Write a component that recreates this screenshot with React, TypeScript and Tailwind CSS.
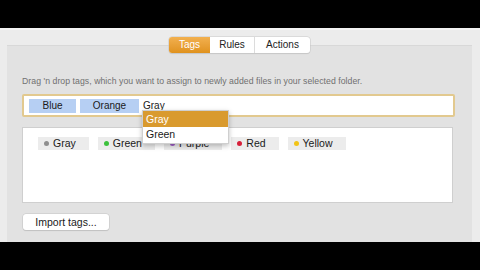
import React from 'react'

const font = { fontFamily: '"Liberation Sans", Arial, sans-serif' }

const tags = [
  { name: 'Gray', dot: 'bg-[#8e8e8e]' },
  { name: 'Green', dot: 'bg-[#3cc13c]' },
  { name: 'Purple', dot: 'bg-[#a05ec8]' },
  { name: 'Red', dot: 'bg-[#d6203a]' },
  { name: 'Yellow', dot: 'bg-[#f2c417]' },
]

function Tabs() {
  return (
    <div className="relative z-10 flex justify-center">
      <div className="flex h-[16px] rounded-[3px] bg-white shadow-[0_0_0_0.5px_#c8c8c8,0_1px_1px_rgba(0,0,0,0.12)] text-[10px] leading-[16px] text-[#222]">
        <div className="w-[41px] text-center rounded-l-[3px] bg-gradient-to-b from-[#f2b04e] to-[#e0921c] text-white">Tags</div>
        <div className="w-[45px] text-center border-r border-[#dcdcdc]">Rules</div>
        <div className="w-[55px] text-center">Actions</div>
      </div>
    </div>
  )
}

export default function App() {
  return (
    <div className="w-[480px] h-[270px] bg-black flex flex-col overflow-hidden" style={font}>
      <div className="h-[28px] shrink-0" />
      <div className="h-[214px] shrink-0 bg-[#ececec] border-t-2 border-[#f3f3f3] flex flex-col pt-[7px] pl-[7px] pr-[8px]">
        <Tabs />
        <div className="relative -mt-[8px] flex-1 bg-[#e2e2e2] border-t border-[#d8d8d8] pl-[15px] pr-[17px] pt-[30px]">
          <p className="text-[8.7px] leading-[10px] text-[#707070] tracking-[0.05px]">
            Drag 'n drop tags, which you want to assign to newly added files in your selected folder.
          </p>
          <div className="mt-[8px] h-[23px] bg-white border-2 border-[#e2c98f] rounded-[2px] flex items-center gap-[4px] pl-[5px] text-[10px] text-[#1a1a1a]">
            <span className="h-[14px] w-[47px] bg-[#b6cff3] text-center leading-[14px]">Blue</span>
            <span className="h-[14px] w-[59px] bg-[#b6cff3] text-center leading-[14px]">Orange</span>
            <span className="leading-[14px]">Gray</span>
          </div>
          <div className="relative mt-[10px] h-[76px] mr-[2px] bg-white border border-[#cfcfcf] flex items-start gap-[9px] pl-[15px] pt-[9px]">
            {tags.map((t) => (
              <div key={t.name} className="h-[13px] bg-[#ececec] flex items-center gap-[4px] pl-[6px] pr-[13px] text-[10.5px] text-[#1a1a1a]">
                <span className={`w-[5px] h-[5px] rounded-full ${t.dot}`} />
                <span className="leading-[13px]">{t.name}</span>
              </div>
            ))}
          </div>
          <div className="absolute left-[135px] top-[64px] w-[87px] bg-white border border-[#cfcfcf] shadow-[0_2px_5px_rgba(0,0,0,0.25)] text-[10.5px] z-20">
            <div className="h-[16px] leading-[16px] pl-[3px] bg-[#d99a2e] text-white">Gray</div>
            <div className="h-[16px] leading-[15px] pl-[3px] text-[#1a1a1a]">Green</div>
          </div>
          <button className="mt-[11px] ml-[1px] h-[16px] w-[86px] bg-white rounded-[3px] shadow-[0_0_0_0.5px_#c4c4c4,0_1px_1px_rgba(0,0,0,0.15)] text-[10.5px] leading-[16px] text-[#1a1a1a]">
            Import tags...
          </button>
        </div>
      </div>
      <div className="flex-1" />
    </div>
  )
}
